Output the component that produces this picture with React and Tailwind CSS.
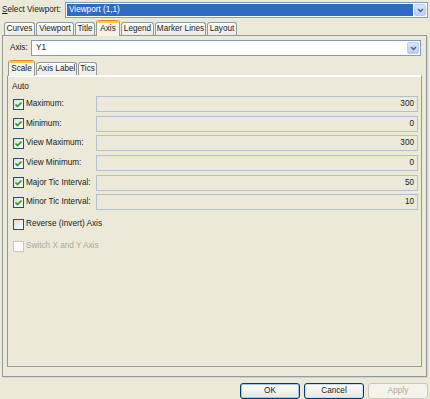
import React from "react";

const rows = [
  { label: "Maximum:", value: "300" },
  { label: "Minimum:", value: "0" },
  { label: "View Maximum:", value: "300" },
  { label: "View Minimum:", value: "0" },
  { label: "Major Tic Interval:", value: "50" },
  { label: "Minor Tic Interval:", value: "10" },
];

const mainTabs = [
  { label: "Curves", w: "w-[31px]" },
  { label: "Viewport", w: "w-[38px]" },
  { label: "Title", w: "w-[20px]" },
  { label: "Axis", w: "w-[24px]", active: true },
  { label: "Legend", w: "w-[33px]" },
  { label: "Marker Lines", w: "w-[51px]" },
  { label: "Layout", w: "w-[30px]" },
];

const subTabs = [
  { label: "Scale", w: "w-[27px]", active: true },
  { label: "Axis Label", w: "w-[41px]" },
  { label: "Tics", w: "w-[19px]" },
];

const Tab = ({ label, w, active }) => {
  if (active) {
    return (
      <div
        className={`${w} h-[16px] -mb-px relative z-10 flex flex-col border-x border-[#919b9c] rounded-t-[3px] bg-[#f4f3ee] overflow-hidden`}
      >
        <div className="h-[1px] bg-[#e68b2c]" />
        <div className="h-[2px] bg-[#ffc83c]" />
        <div className="flex-1 flex items-center justify-center leading-none">{label}</div>
      </div>
    );
  }
  return (
    <div
      className={`${w} h-[13px] flex items-center justify-center leading-none border border-b-0 border-[#919b9c] rounded-t-[3px] bg-gradient-to-b from-white to-[#ecebe5]`}
    >
      {label}
    </div>
  );
};

const Check = ({ checked, disabled }) => (
  <span
    className={`w-[11px] h-[11px] shrink-0 flex items-center justify-center border ${
      disabled
        ? "border-[#cac8bb] bg-white"
        : "border-[#1c5180] bg-gradient-to-br from-[#dcdcd7] to-white"
    }`}
  >
    {checked && (
      <svg width="9" height="9" viewBox="0 0 9 9">
        <path d="M1.5 4.5 L3.5 6.5 L7.5 2.5" fill="none" stroke="#21a121" strokeWidth="1.7" />
      </svg>
    )}
  </span>
);

const Arrow = () => (
  <div className="w-[12px] h-full shrink-0 flex items-center justify-center border border-[#b9cdf4] rounded-[2px] bg-gradient-to-b from-[#dce6fc] to-[#b9cdf7]">
    <svg width="7" height="5" viewBox="0 0 7 5">
      <path d="M1 1 L3.5 3.5 L6 1" fill="none" stroke="#4d6185" strokeWidth="1.4" />
    </svg>
  </div>
);

const Button = ({ label, disabled, primary }) => (
  <button
    type="button"
    className={`w-[60px] h-[16px] flex items-center justify-center leading-none rounded-[3px] border ${
      disabled
        ? "border-[#c9c7ba] text-[#aca899] bg-[#f5f4ea]"
        : primary
        ? "border-[#003c74] bg-gradient-to-b from-white to-[#e6e5dd] shadow-[inset_0_0_0_1px_#a5c3f0]"
        : "border-[#003c74] bg-gradient-to-b from-white to-[#e6e5dd] shadow-[inset_0_0_0_1px_#cfdcf0]"
    }`}
  >
    {label}
  </button>
);

export default function App() {
  return (
    <div className="w-[430px] h-[399px] bg-[#ece9d8] text-[#1a1a1a] text-[8.2px] whitespace-nowrap font-['Liberation_Sans',Arial,sans-serif] flex flex-col overflow-hidden">
      {/* viewport select */}
      <div className="h-[20px] flex pt-[2px]">
        <div className="w-[65px] pl-[2px] pt-[2px] leading-[11px]">
          <span className="underline">S</span>elect Viewport:
        </div>
        <div className="w-[363px] h-[16px] flex border border-[#7f9db9] bg-white p-[1px] gap-[1px]">
          <div className="flex-1 bg-[#316ac5] text-white flex items-center pl-[2px] leading-none">
            Viewport (1,1)
          </div>
          <Arrow />
        </div>
      </div>

      {/* main tabs */}
      <div className="h-[15px] flex items-end gap-[1px] pl-[4px]">
        {mainTabs.map((t) => (
          <Tab key={t.label} {...t} />
        ))}
      </div>

      {/* tab page */}
      <div className="ml-[2px] w-[425px] h-[342px] border border-[#919b9c] shadow-[1px_1px_0_#d6d3ce] bg-[#ece9d8] flex flex-col pt-[4px] pl-[4px]">
        <div className="flex items-center h-[16px]">
          <div className="w-[24px] pl-[3px] leading-none">Axis:</div>
          <div className="w-[390px] h-[16px] flex border border-[#7f9db9] bg-white p-[1px]">
            <div className="flex-1 flex items-center pl-[3px] leading-none">Y1</div>
            <Arrow />
          </div>
        </div>

        <div className="h-[16px] mt-[3px] flex items-end gap-[1px] pl-[1px]">
          {subTabs.map((t) => (
            <Tab key={t.label} {...t} />
          ))}
        </div>

        <div className="w-[415px] h-[292px] border border-[#919b9c] border-t-white shadow-[inset_0_1px_0_#ffffff] flex flex-col">
          <div className="pl-[4px] mt-[5px] h-[12px] leading-[12px]">Auto</div>
          <div className="flex flex-col gap-[3.7px] mt-[3px]">
            {rows.map((r) => (
              <div key={r.label} className="flex items-center h-[16px] pr-[3px]">
                <div className="w-[88px] flex items-center gap-[2px] pl-[5px]">
                  <Check checked />
                  <span className="leading-none">{r.label}</span>
                </div>
                <div className="flex-1 h-[16px] border border-[#b2c1d1] bg-[#ece9d8] flex items-center justify-end pr-[3px] leading-none">
                  {r.value}
                </div>
              </div>
            ))}
          </div>
          <div className="flex items-center gap-[2px] pl-[5px] mt-[8px] h-[12px]">
            <Check />
            <span className="leading-none">Reverse (Invert) Axis</span>
          </div>
          <div className="flex items-center gap-[2px] pl-[5px] mt-[10px] h-[12px] text-[#aca899]">
            <Check disabled />
            <span className="leading-none">Switch X and Y Axis</span>
          </div>
        </div>
      </div>

      {/* dialog buttons */}
      <div className="flex-1 flex items-end justify-end gap-[4px] pr-[2px]">
        <Button label="OK" primary />
        <Button label="Cancel" />
        <Button label="Apply" disabled />
      </div>
    </div>
  );
}
